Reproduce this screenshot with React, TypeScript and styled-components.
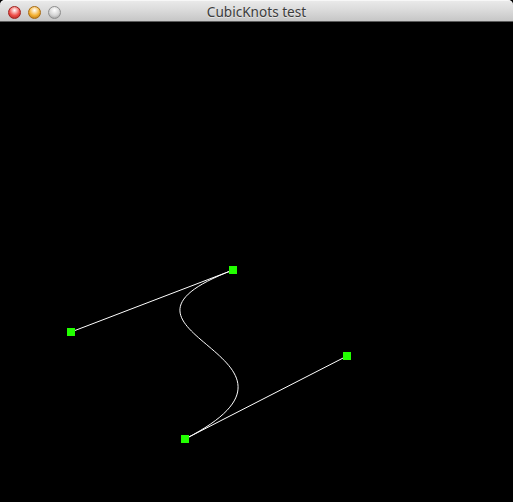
import React from "react";
import styled, { createGlobalStyle } from "styled-components";

const Global = createGlobalStyle`
  html, body { margin: 0; padding: 0; background: #000; }
  #root { width: 513px; height: 502px; }
`;

const Window = styled.div`
  width: 513px;
  height: 502px;
  display: flex;
  flex-direction: column;
  background: #000;
  overflow: hidden;
`;

const TitleBar = styled.div`
  height: 22px;
  flex: 0 0 22px;
  box-sizing: border-box;
  position: relative;
  display: flex;
  align-items: center;
  justify-content: center;
  background: linear-gradient(#ebebeb 0%, #dadada 50%, #c6c6c6 100%);
  border-bottom: 1px solid #5c5c5c;
  border-radius: 5px 5px 0 0;
  box-shadow: inset 0 1px 0 #f7f7f7;
`;

const Lights = styled.div`
  position: absolute;
  left: 8px;
  top: 6px;
  display: flex;
  gap: 7px;
`;

const Light = styled.div<{ $c: string; $d: string }>`
  width: 13px;
  height: 13px;
  border-radius: 50%;
  box-sizing: border-box;
  border: 1px solid ${(p) => p.$d};
  background: radial-gradient(circle at 50% 30%, #ffffff 0%, ${(p) => p.$c} 55%, ${(p) => p.$d} 100%);
`;

const Title = styled.div`
  font-family: "Lucida Grande", "Noto Sans", "DejaVu Sans", sans-serif;
  font-size: 13.6px;
  color: #3c3c3c;
  text-shadow: 0 1px 0 rgba(255, 255, 255, 0.5);
  line-height: 22px;
  padding-top: 3px;
`;

const Canvas = styled.div`
  flex: 1;
  background: #000;
  position: relative;
`;

const A = { x: 71, y: 310 };
const B = { x: 233, y: 248 };
const C = { x: 185, y: 417 };
const D = { x: 347, y: 334 };

const Knot = ({ x, y }: { x: number; y: number }) => (
  <rect x={x - 4} y={y - 4} width={8} height={8} fill="#22ff00" />
);

export default function App() {
  return (
    <>
      <Global />
      <Window>
        <TitleBar>
          <Lights>
            <Light $c="#f0504a" $d="#a0201c" />
            <Light $c="#f4b233" $d="#a86a10" />
            <Light $c="#d4d4d4" $d="#8e8e8e" />
          </Lights>
          <Title>CubicKnots test</Title>
        </TitleBar>
        <Canvas>
          <svg width="513" height="480" style={{ display: "block" }}>
            <line x1={A.x} y1={A.y} x2={B.x} y2={B.y} stroke="#fff" strokeWidth={1} />
            <line x1={C.x} y1={C.y} x2={D.x} y2={D.y} stroke="#fff" strokeWidth={1} />
            <path
              d={`M${B.x} ${B.y} C${A.x} ${A.y} ${D.x} ${D.y} ${C.x} ${C.y}`}
              stroke="#fff"
              strokeWidth={1}
              fill="none"
            />
            <Knot {...A} />
            <Knot {...B} />
            <Knot {...C} />
            <Knot {...D} />
          </svg>
        </Canvas>
      </Window>
    </>
  );
}
